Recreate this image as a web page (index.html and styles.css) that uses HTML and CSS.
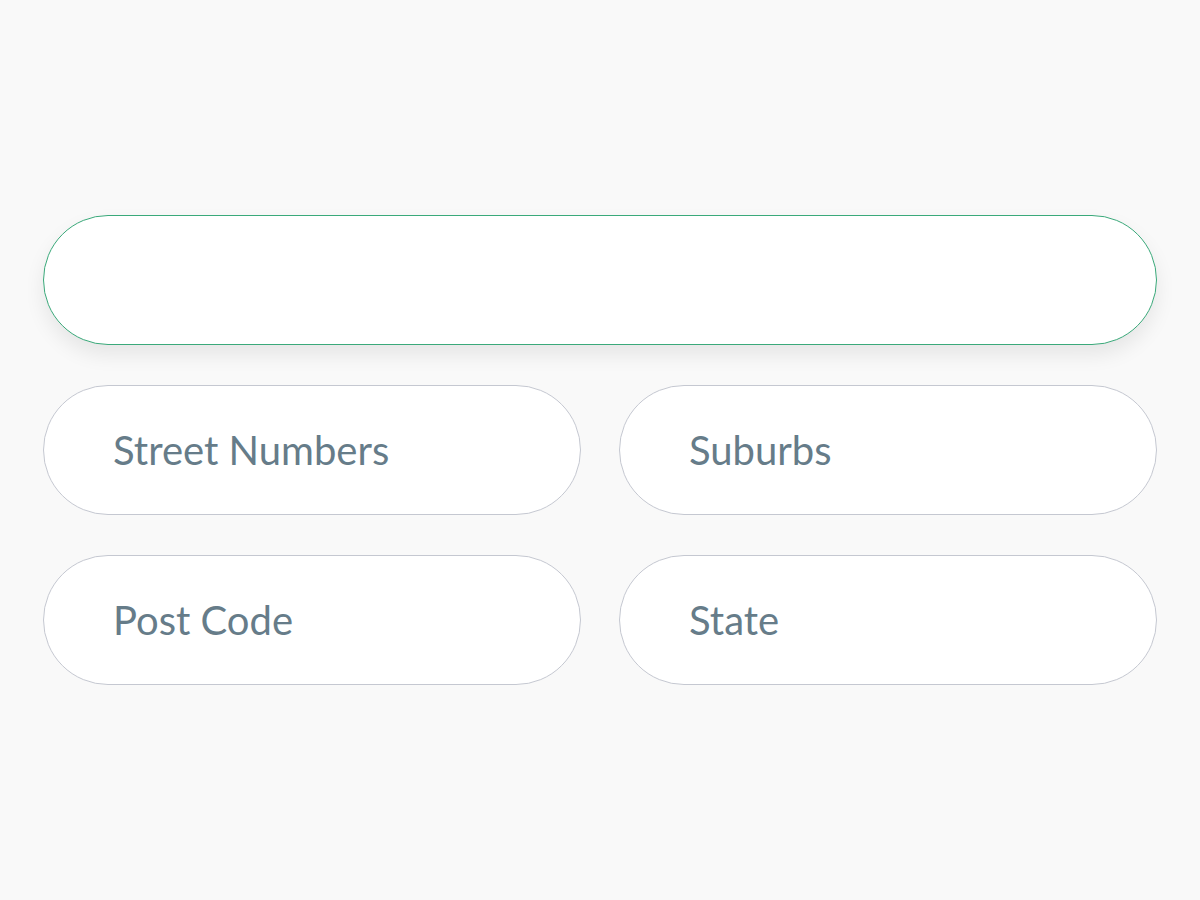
FILE: index.html
```html
<!DOCTYPE html>
<html lang="en">
<head>
<meta charset="utf-8">
<title>Address form</title>
<link rel="stylesheet" href="styles.css">
</head>
<body>
<form class="form">
  <input class="field field--active" type="text" aria-label="Address">
  <div class="grid">
    <input class="field" type="text" placeholder="Street Numbers">
    <input class="field" type="text" placeholder="Suburbs">
    <input class="field" type="text" placeholder="Post Code">
    <input class="field" type="text" placeholder="State">
  </div>
</form>
</body>
</html>
```
FILE: styles.css
```css
html, body {
  margin: 0;
  padding: 0;
  background: #f9f9f9;
  font-family: Lato, "Open Sans", sans-serif;
}
.form {
  box-sizing: border-box;
  width: 1200px;
  padding: 215px 43px 0 43px;
  display: flex;
  flex-direction: column;
  gap: 40px;
}
.grid {
  display: grid;
  grid-template-columns: 1fr 1fr;
  column-gap: 38px;
  row-gap: 40px;
}
.field {
  box-sizing: border-box;
  width: 100%;
  height: 130px;
  margin: 0;
  border: 1px solid #c5c8d1;
  border-radius: 65px;
  background: #fff;
  padding: 0 0 0 69px;
  font-family: Lato, sans-serif;
  font-size: 40px;
  color: #667c89;
  outline: none;
}
.field::placeholder {
  color: #667c89;
  opacity: 1;
}
.field--active {
  border-color: #3aa97a;
  box-shadow: 0 10px 20px rgba(0, 0, 0, 0.08);
}
```
